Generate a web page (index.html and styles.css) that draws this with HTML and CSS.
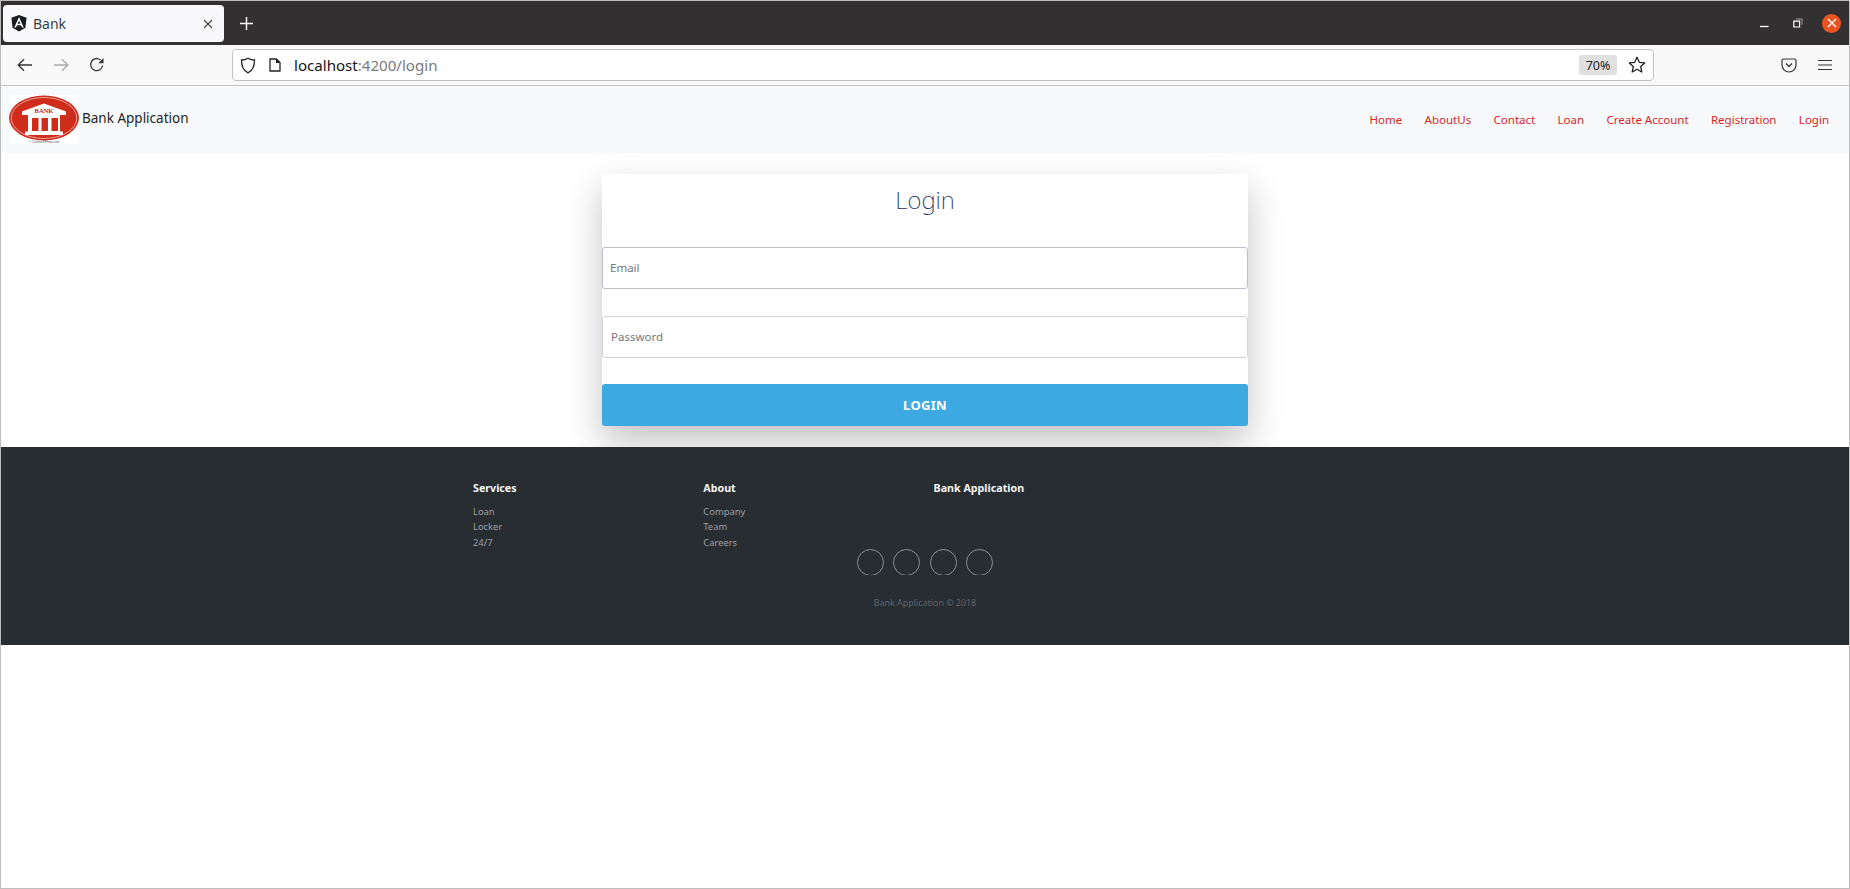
FILE: index.html
```html
<!DOCTYPE html>
<html lang="en">
<head>
<meta charset="utf-8">
<title>Bank</title>
<link rel="stylesheet" href="styles.css">
</head>
<body>
<div class="window">
  <div class="titlebar">
    <div class="tab">
      <svg class="favicon" viewBox="0 0 16 17" width="16" height="17"><path fill="#1a1c20" d="M8 0 15.6 2.7 14.4 12.8 8 16.5 1.6 12.8.4 2.7z"/><path fill="#fff" d="M8 2 3.3 12.6H5l1-2.4h4l1 2.4h1.7zM8 5.6l1.4 3.2H6.6z"/></svg>
      <span class="tab-title">Bank</span>
      <svg class="tab-close" viewBox="0 0 10 10" width="10" height="10"><path d="M1 1l8 8M9 1l-8 8" stroke="#444" stroke-width="1.1" fill="none"/></svg>
    </div>
    <svg class="new-tab" viewBox="0 0 13 13" width="13" height="13"><path d="M6.5 0v13M0 6.5h13" stroke="#fff" stroke-width="1.4" fill="none"/></svg>
    <div class="win-controls">
      <svg viewBox="0 0 10 10" width="10" height="10"><path d="M1 8.5h8.500" stroke="#fff" stroke-width="1.300"/></svg>
      <svg viewBox="0 0 10 10" width="10" height="10"><path d="M.8 3.2h5.800v5.800H.8z" stroke="#fff" stroke-width="1.200" fill="none"/><path d="M3.200 1h5.800v5.600" stroke="#aaa" stroke-width=".9" fill="none"/></svg>
      <span class="win-close"><svg viewBox="0 0 10 10" width="10" height="10"><path d="M1 1l8 8M9 1l-8 8" stroke="#fff" stroke-width="1.400" fill="none"/></svg></span>
    </div>
  </div>
  <div class="toolbar">
    <div class="nav-buttons">
      <svg viewBox="0 0 16 14" width="16" height="14"><path d="M15 7H1.500M7 1.200 1.200 7 7 12.800" stroke="#333" stroke-width="1.300" fill="none"/></svg>
      <svg viewBox="0 0 16 14" width="16" height="14"><path d="M1 7h13.500M9 1.200 14.800 7 9 12.800" stroke="#aaa" stroke-width="1.300" fill="none"/></svg>
      <svg viewBox="0 0 16 16" width="16" height="16"><path d="M13.600 8.500A6 6 0 1 1 11.500 3" stroke="#333" stroke-width="1.300" fill="none"/><path d="M14.500 1v5.200H9.300z" fill="#333"/></svg>
    </div>
    <div class="urlbar">
      <svg class="shield" viewBox="0 0 16 17" width="16" height="17"><path d="M8 1.200C6 2.500 3.500 3 1.500 3c0 6 1.500 10.500 6.500 12.800C13 13.500 14.500 9 14.500 3 12.500 3 10 2.500 8 1.200z" stroke="#222" stroke-width="1.300" fill="none"/></svg>
      <svg class="page" viewBox="0 0 12 14" width="12" height="14"><path d="M1 1h6.500L11 4.500V13H1z" stroke="#222" stroke-width="1.300" fill="none" stroke-linejoin="round"/><path d="M7 1v4h4z" fill="#222"/></svg>
      <span class="url"><span class="url-host">localhost</span>:4200/login</span>
      <span class="zoom-badge">70%</span>
      <svg class="star" viewBox="0 0 18 18" width="18" height="18"><path d="M9 1.300l2.300 5 5.400.600-4 3.700 1.100 5.400L9 13.300 4.200 16l1.100-5.400-4-3.700 5.400-.600z" stroke="#222" stroke-width="1.300" fill="none" stroke-linejoin="round"/></svg>
    </div>
    <div class="tools">
      <svg viewBox="0 0 16 15" width="16" height="15"><path d="M2.500 1h11A1.500 1.500 0 0 1 15 2.500V7A7 7 0 0 1 1 7V2.500A1.500 1.500 0 0 1 2.500 1z" stroke="#333" stroke-width="1.200" fill="none"/><path d="M5 5.500 8 8.500l3-3" stroke="#333" stroke-width="1.300" fill="none"/></svg>
      <svg viewBox="0 0 14 12" width="14" height="12"><path d="M0 1.500h14M0 6h14M0 10.500h14" stroke="#333" stroke-width="1.200"/></svg>
    </div>
  </div>
  <nav class="navbar">
    <div class="brand">
      <svg class="logo" viewBox="0 0 70 49" width="70" height="49">
        <rect width="70" height="49" fill="#fff"/>
        <ellipse cx="35" cy="23" rx="35" ry="22.500" fill="#cf2c1c"/>
        <ellipse cx="35" cy="23" rx="32.800" ry="20.500" fill="none" stroke="#f3c4bd" stroke-width=".8"/>
        <path fill="#fff" d="M35 8.500 13 16.500v3.500h44v-3.500z"/>
        <text class="logo-bank" x="35" y="17.500" text-anchor="middle">BANK</text>
        <path fill="#fff" d="M19 20h32v17H19zM16 36.500h38v3.500H16z"/>
        <path fill="#cf2c1c" d="M23 23h6.500v13H23zM32.500 23H39v13h-6.500zM42.500 23H49v13h-6.500z"/>
        <text class="logo-credit" x="35" y="48" text-anchor="middle">© CanStockPhoto.com</text>
      </svg>
      <span class="brand-text">Bank Application</span>
    </div>
    <ul class="nav-links">
      <li>Home</li><li>AboutUs</li><li>Contact</li><li>Loan</li><li>Create Account</li><li>Registration</li><li>Login</li>
    </ul>
  </nav>
  <main class="content">
    <section class="card">
      <h1 class="card-title">Login</h1>
      <div class="field field-email">Email</div>
      <div class="field field-pass">Password</div>
      <button class="login-btn" type="button">LOGIN</button>
    </section>
  </main>
  <footer class="footer">
    <div class="foot-cols">
      <div class="foot-col">
        <h3>Services</h3>
        <ul><li>Loan</li><li>Locker</li><li>24/7</li></ul>
      </div>
      <div class="foot-col">
        <h3>About</h3>
        <ul><li>Company</li><li>Team</li><li>Careers</li></ul>
      </div>
      <div class="foot-col">
        <h3>Bank Application</h3>
      </div>
    </div>
    <div class="social">
      <svg class="ring" viewBox="0 0 27 26" width="27" height="26"><circle cx="13.500" cy="13.500" r="13"/></svg>
      <svg class="ring" viewBox="0 0 27 26" width="27" height="26"><circle cx="13.500" cy="13.500" r="13"/></svg>
      <svg class="ring" viewBox="0 0 27 26" width="27" height="26"><circle cx="13.500" cy="13.500" r="13"/></svg>
      <svg class="ring" viewBox="0 0 27 26" width="27" height="26"><circle cx="13.500" cy="13.500" r="13"/></svg>
    </div>
    <p class="copy">Bank Application © 2018</p>
  </footer>
</div>
</body>
</html>
```
FILE: styles.css
```css
* { box-sizing: border-box; }
html, body { margin: 0; height: 100%; background: #fff; }
body { font-family: "Noto Sans", sans-serif; overflow: hidden; }
ul { list-style: none; margin: 0; padding: 0; }
svg { display: block; flex: none; }

.window {
  height: 889px;
  border: 1px solid #bdbdbd;
  display: flex;
  flex-direction: column;
}

.titlebar {
  height: 44px;
  background: #333031;
  display: flex;
  align-items: center;
  padding: 0 0 0 2px;
  flex: none;
}
.tab {
  width: 221px;
  height: 37px;
  margin-top: 1px;
  background: #f9f9fb;
  border-radius: 4px;
  display: flex;
  align-items: center;
  padding: 0 11px 0 8px;
  gap: 6px;
}
.tab-title { font-size: 14px; color: #3c3f44; flex: 1; }
.new-tab { margin-left: 16px; }
.win-controls {
  margin-left: auto;
  display: flex;
  align-items: center;
  gap: 24px;
  padding-right: 8px;
}
.win-close {
  width: 19px;
  height: 19px;
  margin-left: -5px;
  border-radius: 50%;
  background: #e95420;
  display: flex;
  align-items: center;
  justify-content: center;
}

.toolbar {
  height: 41px;
  background: #f9f9fa;
  border-bottom: 1px solid #c4c4c4;
  display: flex;
  align-items: center;
  flex: none;
}
.nav-buttons {
  display: flex;
  align-items: center;
  gap: 20px;
  width: 231px;
  padding-left: 16px;
}
.urlbar {
  width: 1422px;
  height: 32px;
  background: #fff;
  border: 1px solid #c2c2c2;
  border-radius: 4px;
  display: flex;
  align-items: center;
  padding: 0 7px 0 7px;
}
.page { margin-left: 13px; }
.url { margin-left: 13px; font-size: 15.100px; color: #777a80; flex: 1; }
.url-host { color: #15141a; }
.zoom-badge {
  width: 38px;
  height: 20px;
  background: #e0e0e0;
  border-radius: 3px;
  font-size: 12.500px;
  color: #222;
  display: flex;
  align-items: center;
  justify-content: center;
  margin-right: 11px;
}
.tools {
  display: flex;
  align-items: center;
  gap: 21px;
  margin-left: 127px;
}

.navbar {
  height: 67px;
  background: #f8f9fa;
  display: flex;
  align-items: center;
  justify-content: space-between;
  padding: 0 20px 0 8px;
  flex: none;
}
.brand { display: flex; align-items: center; gap: 3px; }
.brand-text { font-size: 13.500px; color: #212529; margin-top: -3px; }
.logo-bank { font-family: "Liberation Serif", serif; font-weight: 700; font-size: 6.500px; fill: #c62a1c; }
.logo-credit { font-family: "Liberation Sans", sans-serif; font-size: 3px; fill: #555; }
.nav-links { display: flex; gap: 22.400px; font-size: 11.500px; color: #dd1f28; margin-top: -1px; }

.content {
  height: 294px;
  padding-top: 21px;
  flex: none;
}
.card {
  width: 646px;
  height: 252px;
  margin-left: 601px;
  background: #fff;
  border-radius: 3px;
  box-shadow: 0 16px 36px rgba(0,0,0,.24);
  display: flex;
  flex-direction: column;
}
.card-title {
  margin: 0;
  height: 73px;
  padding-top: 10px;
  text-align: center;
  font-family: "Noto Sans", sans-serif;
  font-weight: 200;
  font-size: 24px;
  line-height: 32px;
  color: #13305e;
}
.field {
  height: 42px;
  background: #fff;
  border: 1px solid #c5c5d0;
  border-radius: 3px;
  display: flex;
  align-items: center;
  padding-bottom: 2px;
  font-size: 11.500px;
  color: #74787d;
}
.field-email { padding-left: 7px; border-color: #bdbdca; }
.field-pass { margin-top: 27px; padding-left: 8px; border-color: #d3d3dc; }
.login-btn {
  margin-top: 26px;
  height: 42px;
  border: 0;
  border-radius: 3px;
  background: #3da9e3;
  color: #fff;
  font-family: "Noto Sans", sans-serif;
  font-weight: 700;
  font-size: 13px;
  letter-spacing: .3px;
  padding: 0;
}

.footer {
  height: 198px;
  background: #282d32;
  padding-top: 33px;
  flex: none;
}
.foot-cols { display: flex; padding-left: 472px; }
.foot-col { width: 230.300px; }
.foot-col h3 { margin: 0 0 8px; font-size: 10.700px; line-height: 16px; font-weight: 700; color: #f5f5f5; }
.foot-col ul { font-size: 9.400px; line-height: 15.400px; color: #9a9fa4; }
.social {
  display: flex;
  justify-content: center;
  gap: 9.300px;
  margin-top: -1.200px;
}
.ring { fill: none; stroke: #8f9295; stroke-width: 1; }
.copy {
  margin: 21px 0 0;
  text-align: center;
  font-size: 8.900px;
  line-height: 14px;
  color: #5d646b;
}
```
